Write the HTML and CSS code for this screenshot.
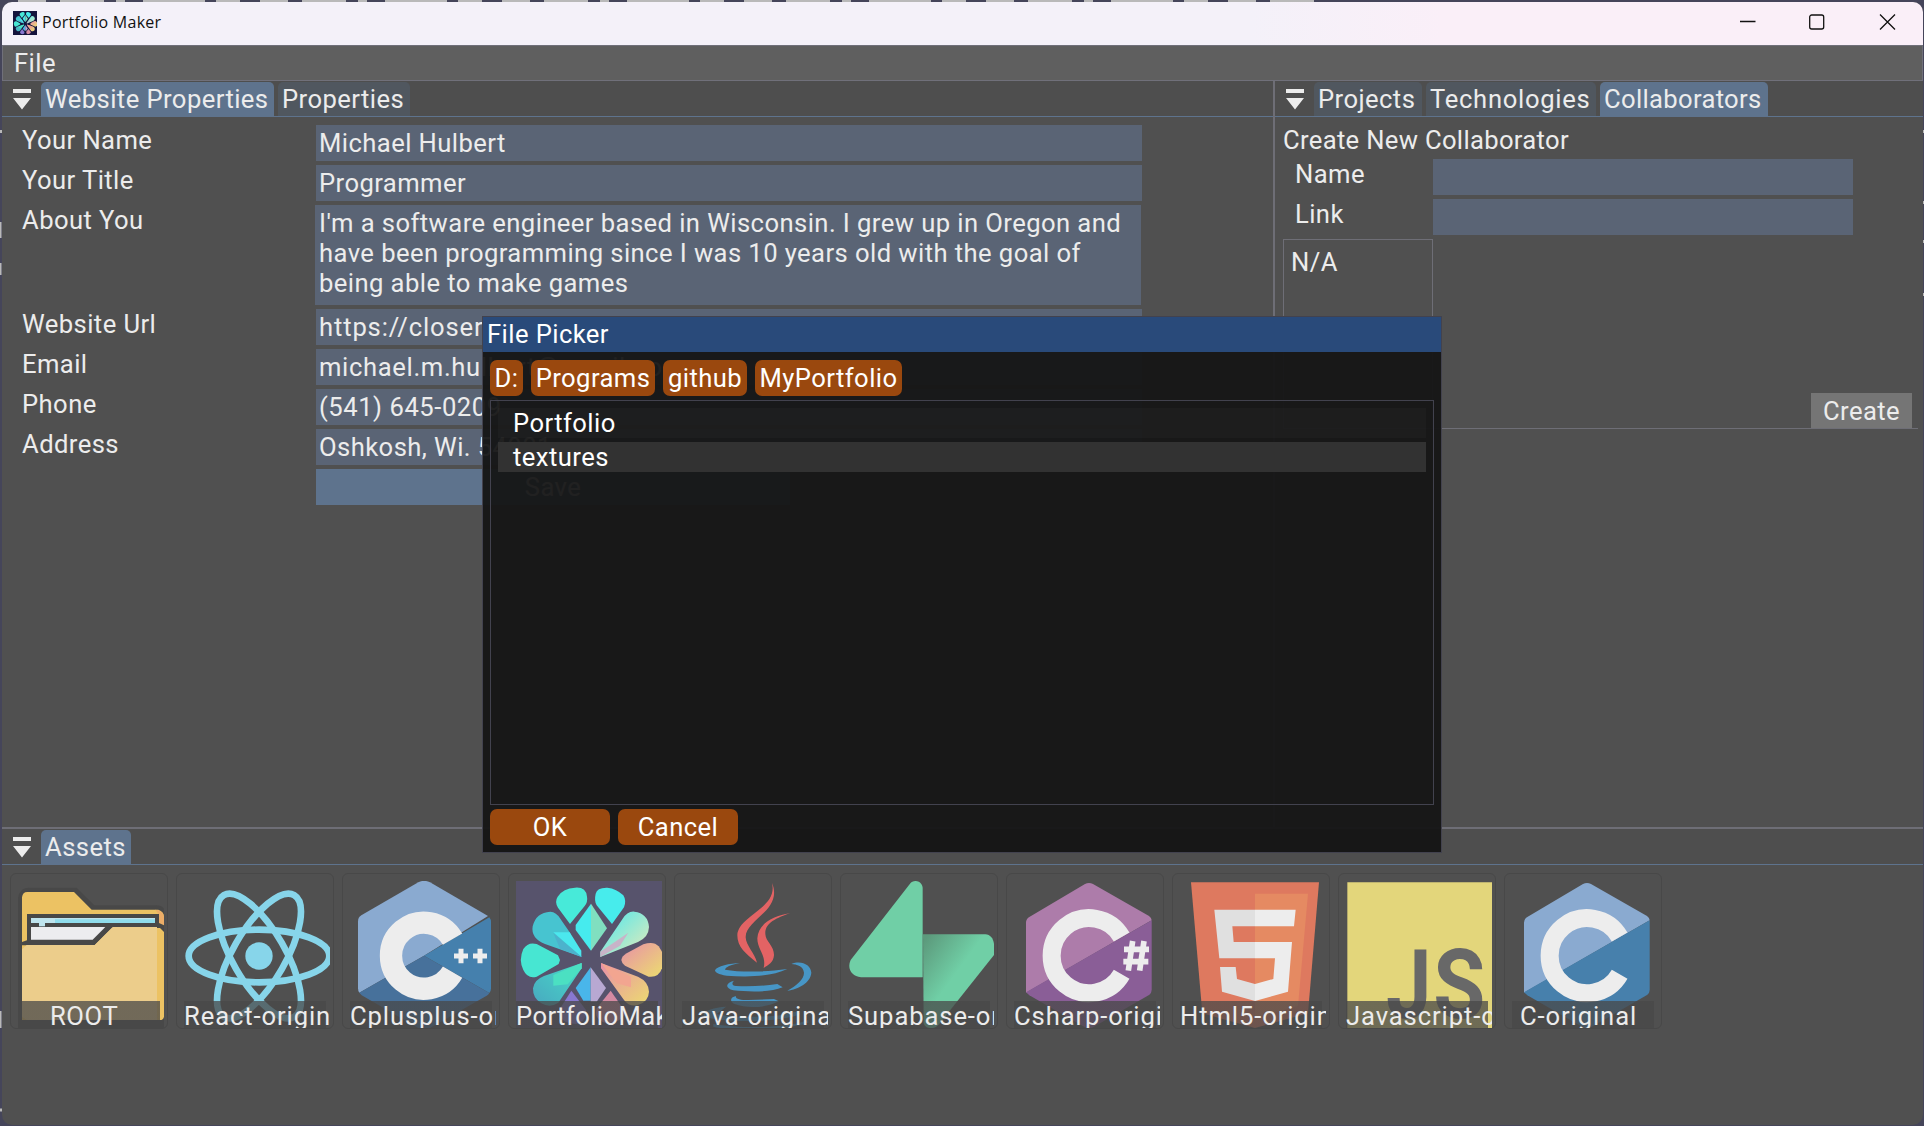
FILE: index.html
```html
<!DOCTYPE html>
<html lang="en">
<head>
<meta charset="utf-8">
<title>Portfolio Maker</title>
<link rel="stylesheet" href="styles.css">
</head>
<body>
<svg class="defs" width="0" height="0">
  <defs>
    <linearGradient id="warm" x1="0" y1="0" x2="1" y2="1"><stop offset="0" stop-color="#e88fa8"/><stop offset="1" stop-color="#ecdc70"/></linearGradient>
    <linearGradient id="mint" x1="0" y1="0" x2="1" y2="1"><stop offset="0" stop-color="#4be8ee"/><stop offset="1" stop-color="#e8eab8"/></linearGradient>
    <linearGradient id="sea" x1="1" y1="0" x2="0" y2="1"><stop offset="0" stop-color="#48dcc8"/><stop offset="1" stop-color="#48a8c0"/></linearGradient>
    <linearGradient id="supa" gradientUnits="userSpaceOnUse" x1="290" y1="230" x2="400" y2="310"><stop offset="0" stop-color="#5c9a7c"/><stop offset="1" stop-color="#70cfa6"/></linearGradient>
    <symbol id="flower" viewBox="48 63 438 441" preserveAspectRatio="none">
      <path fill="#47ead9" d="M210 192L174 143Q163 125 173 110Q190 84 225 83Q258 80 261 110Q264 125 254 138Z"/>
      <path fill="#47ecec" d="M336 192L290 136Q282 122 287 101Q291 82 322 83Q350 86 370 106Q380 122 372 142Z"/>
      <path fill="#47c4d0" d="M245 291L135 252Q92 235 98 199Q108 157 151 155Q169 156 181 176L209 217Z"/>
      <path fill="#4be8ee" d="M160 217H209L244 272V290Z"/><path fill="#4cb2cc" d="M160 219L245 291L180 266Z"/>
      <path fill="url(#mint)" d="M301 291V275L367 178Q382 153 403 155Q444 160 447 201Q446 232 414 246Z"/>
      <path fill="#c8b4c8" d="M301 291V275L385 218L360 257Z"/>
      <path fill="#46ebee" d="M273 131V272L227 210V195Z"/><path fill="#80dfc0" d="M273 131L321 205L273 272Z"/>
      <path fill="#47e6d2" d="M180 300L176 312L110 350Q83 358 70 330Q55 300 70 267Q84 245 110 252L174 286Z"/>
      <path fill="url(#warm)" d="M364 300Q366 288 380 280L430 253Q461 242 476 259L486 275V325Q476 354 446 350L375 317Q365 310 364 300Z"/>
      <path fill="url(#sea)" d="M245 309V325L175 428Q150 445 124 430Q98 415 99 385Q102 360 132 348Z"/>
      <path fill="#4be0c2" d="M245 309V325L203 373L160 377V345Z"/>
      <path fill="url(#warm)" d="M303 309L414 350Q446 365 447 395Q446 426 412 436Q386 440 372 420L303 325Z"/>
      <path fill="#f2a590" d="M303 309L393 350V382L350 370Z"/>
      <path fill="#49b6ea" d="M272 322V422H250L227 384Z"/><path fill="#b8a8d2" d="M272 322L318 384L290 425H272Z"/>
      <path fill="#8878d0" d="M214 392L258 450Q262 482 228 492Q180 490 174 455Z"/>
      <path fill="#d58aa2" d="M332 392L376 455Q368 488 320 490Q280 480 290 445Z"/>
    </symbol>
  </defs>
</svg>

<svg class="backdrop" width="1924" height="1126">
  <rect width="1924" height="1126" fill="#45455a"/>
  <path d="M18 1H1320" stroke="#b9b9b9" stroke-width="2" stroke-dasharray="28 14 44 12 9 18 62 11 24 20"/>
  <path d="M0 131.500H2M0 222V238M0 263V275M0 1011V1028M0 1110H2M1923 130V133M1923 201V204M1923 240V243M1923 293V296" stroke="#b9b9b9" stroke-width="3"/>
</svg>

<div class="window">
  <header class="titlebar">
    <svg class="app-icon" width="24" height="24"><rect width="24" height="24" fill="#14143c"/><use href="#flower" width="24" height="24"/></svg>
    <span class="app-name">Portfolio Maker</span>
    <svg class="controls" width="156" height="16" fill="none" stroke="#111" stroke-width="1.300"><path d="M0 7.500H15.500"/><rect x="69.700" y="1" width="14" height="14" rx="2"/><path d="M140 .5L155 15.500M155 .5L140 15.500"/></svg>
  </header>
  <nav class="menubar">File</nav>

  <div class="docks">
    <section class="pane left">
      <div class="tabs">
        <svg class="arrow" width="18" height="21"><path d="M0 0H18V4H0ZM0 9H18L9 20.500Z"/></svg>
        <span class="tab active w-wp">Website Properties</span><span class="tab w-pr">Properties</span>
      </div>
      <div class="form">
        <label>Your Name</label><div class="input">Michael Hulbert</div>
        <label>Your Title</label><div class="input">Programmer</div>
        <label>About You</label><div class="input area">I'm a software engineer based in Wisconsin. I grew up in Oregon and<br>have been programming since I was 10 years old with the goal of<br>being able to make games</div>
        <label>Website Url</label><div class="input url">https://closer</div>
        <label>Email</label><div class="input email">michael.m.hulbert@gmail.com</div>
        <label>Phone</label><div class="input phone">(541) 645-0209</div>
        <label>Address</label><div class="input">Oshkosh, Wi. 54901</div>
        <span></span><div class="save">Save</div>
      </div>
    </section>
    <section class="pane right">
      <div class="tabs">
        <svg class="arrow" width="18" height="21"><path d="M0 0H18V4H0ZM0 9H18L9 20.500Z"/></svg>
        <span class="tab w-pj">Projects</span><span class="tab w-te">Technologies</span><span class="tab active w-co">Collaborators</span>
      </div>
      <div class="collab">
        <div class="heading">Create New Collaborator</div>
        <div class="fields">
          <label>Name</label><div class="input"></div>
          <label>Link</label><div class="input"></div>
        </div>
        <div class="lower"><div class="listbox">N/A</div><div class="create">Create</div></div>
      </div>
    </section>
  </div>

  <section class="assets">
    <div class="tabs">
      <svg class="arrow" width="18" height="21"><path d="M0 0H18V4H0ZM0 9H18L9 20.500Z"/></svg>
      <span class="tab active w-as">Assets</span>
    </div>
    <div class="cards">
      <div class="card"><svg viewBox="54 243 438 441">
        <path fill="#484848" d="M54 684V295Q58 263 85 263H230L283 316H470Q492 318 492 330V684Z"/>
        <path fill="#ecc263" d="M66 660V292Q68 276 82 276H222L275 329H475Q492 335 492 350V650Q490 660 480 660Z"/>
        <path fill="#ecad68" d="M466 329Q492 332 492 352V376L476 368V343Z"/>
        <path fill="#484848" d="M66 436V426L81 421V342H477V369L492 376V396L480 384H336L284 436Z"/>
        <path fill="#bfe4ee" d="M93 354H465V369H93Z"/><path fill="#8fdcec" d="M165 358H465V369H165Z"/>
        <path fill="#ececef" d="M93 381H316L278 419H93Z"/><path fill="#bfe4ee" d="M117 369H135V379H117Z"/>
        <path fill="#eccd8b" d="M66 448L80 435H284L338 381H471V660H80L66 650Z"/></svg><div class="name root">ROOT</div></div>
      <div class="card"><svg viewBox="552 243 438 441"><circle cx="777" cy="468" r="41" fill="#87d5ea"/><g fill="none" stroke="#87d5ea" stroke-width="20"><ellipse cx="777" cy="468" rx="211" ry="79"/><ellipse cx="777" cy="468" rx="211" ry="79" transform="rotate(60 777 468)"/><ellipse cx="777" cy="468" rx="211" ry="79" transform="rotate(120 777 468)"/></g></svg><div class="name">React-original</div></div>
      <div class="card"><svg viewBox="1050 243 438 441">
        <path fill="#8aaad0" d="M1255 247Q1272 238 1290 247L1464 348L1272 467L1078 578Q1074 574 1074 565V365Q1074 352 1084 346Z"/>
        <path fill="#4580ad" d="M1272 467L1468 352Q1473 358 1473 367V565Q1473 574 1468 579Z"/>
        <path fill="#47719b" d="M1272 467L1468 579Q1466 584 1460 587L1290 684Q1272 694 1255 684L1085 586L1078 578Z"/>
        <path fill="none" stroke="#ededed" stroke-width="67" d="M1357.700 417.500A99 99 0 1 0 1357.700 516.500"/>
        <path stroke="#ededed" stroke-width="15" d="M1362 468H1404M1383 446V490M1419 468H1461M1440 446V490"/></svg><div class="name">Cplusplus-original</div></div>
      <div class="card"><svg viewBox="48 63 438 441"><rect x="48" y="63" width="438" height="441" fill="#57536c"/><use href="#flower" x="48" y="63" width="438" height="441"/></svg><div class="name plain">PortfolioMaker</div></div>
      <div class="card"><svg viewBox="546 63 438 441">
        <path fill="#e36364" d="M816 69C850 150 735 180 737 232C738 258 765 280 771 308C735 280 712 260 712 226C715 165 835 145 816 69Z"/>
        <path fill="#e36364" d="M870 160C815 178 795 195 796 222C797 245 823 258 822 286C820 308 805 315 791 324C800 285 772 270 772 235C775 190 820 168 870 160Z"/>
        <path fill="#4796c6" d="M720 309C690 314 677 322 675 329C720 337 790 337 862 327C815 350 745 352 680 347C655 344 645 337 645 331C650 318 690 310 720 309Z"/>
        <path fill="#4796c6" d="M874 312C905 300 932 315 934 338C932 368 895 388 862 392C890 376 912 358 912 338C910 318 890 313 874 312ZM702 362C695 370 695 376 708 378C750 380 790 378 832 372L848 382C810 398 745 396 700 391C675 384 675 370 702 362ZM708 408C705 416 720 420 745 420L822 417L836 424C800 444 740 446 704 432C688 424 690 412 708 408ZM678 440C640 442 605 455 612 468C650 490 850 488 900 462C895 450 870 458 850 464C780 474 690 472 650 462ZM640 492C720 506 860 506 925 480V488C860 510 700 516 640 500Z"/></svg><div class="name">Java-original</div></div>
      <div class="card"><svg viewBox="54 63 438 441">
        <path fill="#70cfa6" d="M240 71C250 58 275 60 278 83V352H93C65 350 50 325 62 300Z"/>
        <path fill="url(#supa)" d="M279 223H466C488 225 496 245 492 285L326 494C310 512 282 504 281 488Z"/></svg><div class="name">Supabase-original</div></div>
      <div class="card"><svg viewBox="552 63 438 441">
        <path fill="#ad7caa" d="M765 72Q777 66 789 72L957 168Q965 174 965 181L588 398V188Q588 177 598 171Z"/>
        <path fill="#8a5e97" d="M965 181V388Q965 400 957 405L789 502Q777 508 765 502L598 406L588 397Z"/>
        <path fill="none" stroke="#ededed" stroke-width="54" d="M875 231A112.500 112.500 0 1 0 875 343"/>
        <path stroke="#ededed" stroke-width="17" fill="none" d="M882 268H957M880 305H955M908 243L895 332M942 243L929 332"/></svg><div class="name">Csharp-original</div></div>
      <div class="card"><svg viewBox="60 63 438 441">
        <path fill="#de795f" d="M93 67H477L444 460L285 504L127 460Z"/><path fill="#e58a62" d="M285 101H444L414 438L285 474Z"/>
        <path fill="#e0e0e0" d="M163 149H285V199H217L221 246H285V295H178ZM180 321H227L231 357L285 372V423L186 395Z"/>
        <path fill="#ededed" d="M285 149H407L402 199H285ZM285 246H396L384 395L285 423V372L340 357L345 295H285Z"/></svg><div class="name">Html5-original</div></div>
      <div class="card"><svg viewBox="558 63 438 441"><path fill="#e3d67b" d="M562 67H996V504H562Z"/><g class="js"><text x="678" y="474" textLength="136" lengthAdjust="spacingAndGlyphs">J</text><text x="820" y="474" textLength="156" lengthAdjust="spacingAndGlyphs">S</text></g></svg><div class="name">Javascript-original</div></div>
      <div class="card"><svg viewBox="1056 63 438 441">
        <path fill="#8aaad0" d="M1269 72Q1281 66 1293 72L1461 168Q1469 174 1469 181L1092 398V188Q1092 177 1102 171Z"/>
        <path fill="#4780ac" d="M1469 181V388Q1469 400 1461 405L1293 502Q1281 508 1269 502L1102 406L1092 397Z"/>
        <path fill="none" stroke="#ededed" stroke-width="54" d="M1379 231A112.500 112.500 0 1 0 1379 343"/></svg><div class="name c">C-original</div></div>
    </div>
  </section>
</div>

<div class="dialog">
  <div class="dialog-title">File Picker</div>
  <div class="crumbs"><span class="w-d">D:</span><span class="w-p">Programs</span><span class="w-g">github</span><span class="w-m">MyPortfolio</span></div>
  <div class="files"><div class="file">Portfolio</div><div class="file hover">textures</div></div>
  <div class="actions"><span>OK</span><span>Cancel</span></div>
</div>
</body>
</html>
```
FILE: styles.css
```css
* { box-sizing: border-box; }
body { margin: 0; width: 1924px; height: 1126px; overflow: hidden; position: relative; background: #45455a; font: 25.6px/30px Roboto, sans-serif; color: #ececec; white-space: nowrap; letter-spacing: 0.43px; }
svg { display: block; }
.defs, .backdrop { position: absolute; left: 0; top: 0; }
.window { position: relative; margin: 2px 1px 0 2px; height: 1123px; background: #505050; border-radius: 10px; overflow: hidden; display: flex; flex-direction: column; }
.titlebar { height: 43px; background: linear-gradient(90deg, #f4f1f9 65%, #faeff8 75%); display: flex; align-items: center; padding: 0 27px 0 11px; flex: none; }
.app-icon { margin-top: -2px; }
.app-name { font: 16px/20px "Open Sans", sans-serif; color: #111; letter-spacing: 0.25px; margin: -4px 0 0 5px; flex: 1; }
.controls { margin-top: -3px; }
.menubar { height: 36px; flex: none; border: 1px solid #70707a; background: #5f5f5f; padding: 2px 0 0 11px; }
.docks { display: flex; height: 748px; flex: none; border-bottom: 2px solid #6e6e76; }
.pane.left { width: 1273px; border-right: 2px solid #6e6e76; }
.pane.right { flex: 1; }
.tabs { height: 36px; background: #4e4e4e; border-bottom: 1px solid #5e738d; display: flex; padding: 1px 0 0 11px; gap: 4px; }
.arrow { fill: #ececec; margin: 7px 6px 0 0; flex: none; }
.tab { height: 34px; padding: 2px 0 0 4px; border-radius: 5px 5px 0 0; background: #50575f; flex: none; }
.tab.active { background: #5e738d; }
.w-wp { width: 233px; } .w-pr { width: 132px; } .w-pj { width: 108px; } .w-te { width: 170px; } .w-co { width: 168px; } .w-as { width: 90px; }
.w-te { letter-spacing: 0.7px; }
.w-co, .heading { letter-spacing: 0.33px; }
.form { display: grid; grid-template-columns: 294px 826px; row-gap: 4px; padding: 8px 0 0 20px; }
.input { height: 36px; background: #5a6475; padding: 3px 0 0 3px; }
.area { height: 100px; margin-left: -1px; width: 826px; padding-left: 4px; }
.url { letter-spacing: 0.85px; }
.email { letter-spacing: 0.65px; }
.phone { letter-spacing: 0.55px; }
.save { width: 474px; height: 36px; background: #5e738d; text-align: center; padding-top: 3px; }
.collab { padding: 8px 5px 0 8px; }
.fields { margin-top: 4px; display: grid; grid-template-columns: 138px 420px; row-gap: 4px; padding-left: 12px; }
.lower { margin-top: 4px; height: 190px; display: flex; justify-content: space-between; align-items: flex-end; border-bottom: 1px solid #6e6e76; }
.listbox { width: 150px; height: 189px; border: 1px solid #6e6e76; border-bottom: 0; padding: 7px; }
.create { width: 101px; height: 35px; margin-right: 6px; background: #757575; text-align: center; padding-top: 3px; }
.assets { flex: 1; }
.cards { display: flex; gap: 8px; padding: 8px 0 0 8px; }
.card { position: relative; flex: none; width: 158px; height: 156px; border: 1px solid #484848; border-radius: 6px; padding: 7px 0 0 7px; }
.card svg { width: 146px; height: 147px; }
.name { position: absolute; left: 7px; top: 127px; width: 146px; height: 27px; overflow: hidden; background: linear-gradient(rgba(72,72,72,.75), rgba(72,72,72,.75)) 0 0 / 142px 27px no-repeat; line-height: 30px; letter-spacing: 0.9px; }
.plain { letter-spacing: 0.4px; }
.root { padding-left: 32px; letter-spacing: 0.6px; }
.c { padding-left: 8px; }
.js { font: bold 287px Roboto, sans-serif; fill: #686868; letter-spacing: 0; }
.dialog { position: absolute; left: 482px; top: 316px; width: 960px; height: 537px; background: rgba(20,20,20,.94); border: 1px solid #42424e; color: #fff; padding: 0 7px; }
.dialog-title { height: 35px; margin: 0 -7px; background: #294a7a; padding: 2px 0 0 4px; }
.crumbs, .actions { display: flex; gap: 8px; }
.crumbs { margin-top: 8px; }
.crumbs span, .actions span { height: 36px; border-radius: 7px; background: #9a480e; text-align: center; padding-top: 3px; }
.w-d { width: 33px; } .w-p { width: 124px; } .w-g { width: 84px; } .w-m { width: 147px; }
.files { margin: 4px 0; height: 405px; border: 1px solid #42424e; padding: 7px; }
.file { height: 30px; padding-left: 15px; background: rgba(255,255,255,.025); margin-bottom: 4px; }
.hover { background: #323232; }
.actions span { width: 120px; }
```
